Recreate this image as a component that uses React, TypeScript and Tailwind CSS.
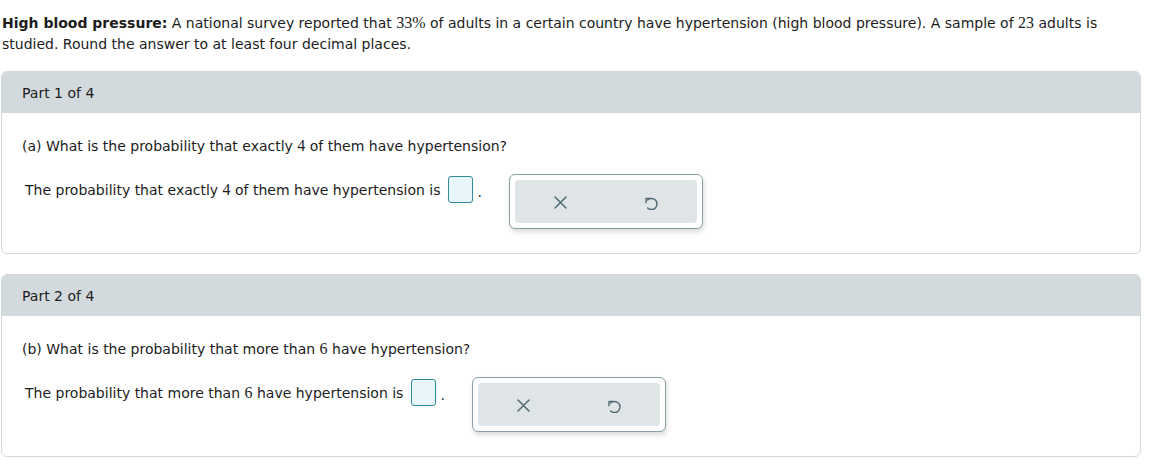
import { memo } from "react";

function Num({ children }: { children: React.ReactNode }) {
  return <span className="font-['Liberation_Serif'] text-[16px]">{children}</span>;
}

const XIcon = () => (
  <svg width="13" height="13" viewBox="0 0 13 13" fill="none">
    <path d="M1 1 L12 12 M12 1 L1 12" stroke="#4f6973" strokeWidth="1.5" strokeLinecap="round" />
  </svg>
);

// rotate-left: corner arrowhead top-left, arc clockwise round to the lower left
const UndoIcon = () => (
  <svg width="14" height="15" viewBox="0 0 14 15" fill="none">
    <path d="M3.6 5.1 A5.5 5.5 0 1 1 3.6 12.9" stroke="#4f6973" strokeWidth="1.4" strokeLinecap="round" />
    <path d="M6.4 3.4 L2 3.4 L2 7.8" stroke="#4f6973" strokeWidth="1.4" strokeLinecap="round" strokeLinejoin="round" />
  </svg>
);

const ToolPanel = memo(function ToolPanel() {
  return (
    <div className="ml-[27px] rounded-[6px] border border-[#8a9ea6] bg-white p-[5px] shadow-[1px_3px_5px_rgba(0,0,0,0.14)]">
      <div className="flex h-[43px] w-[182px] rounded-[4px] bg-[#dfe5e7]">
        <button className="flex flex-1 items-center justify-center pt-[1px]">
          <XIcon />
        </button>
        <button className="flex flex-1 items-center justify-center pt-[2px]">
          <UndoIcon />
        </button>
      </div>
    </div>
  );
});

const PartCard = memo(function PartCard({
  part,
  question,
  answer,
}: {
  part: number;
  question: React.ReactNode;
  answer: React.ReactNode;
}) {
  return (
    <div className="ml-[1px] w-[1140px] overflow-hidden rounded-[6px] border border-[#d3d9db] bg-white">
      <div className="flex h-[41px] items-center bg-[#d2dadd] pl-[20px] leading-[20px]">
        Part {part} of 4
      </div>
      <div className="pb-[24px] pl-[20px] pt-[23px]">
        <p className="leading-[20px]">{question}</p>
        <div className="mt-[18px] flex items-start">
          <div className="ml-[3px] mt-[2px] flex items-center">
            <span className="pt-[1px] leading-[20px]">{answer}</span>
            <span className="ml-[8px] inline-block h-[27px] w-[25px] rounded-[3px] border-[1.5px] border-[#2f8a99] bg-[#e8f5f9]" />
            <span className="ml-[4px] mt-[6px]">.</span>
          </div>
          <ToolPanel />
        </div>
      </div>
    </div>
  );
});

export default function App() {
  return (
    <div className="min-h-[464px] bg-white font-['DejaVu_Sans'] text-[14px] text-[#1c1c1c]">
      <p className="pl-[2px] pt-[12px] leading-[21px]">
        <b>High blood pressure:</b> A national survey reported that <Num>33%</Num> of adults in a
        certain country have hypertension (high blood pressure). A sample of <Num>23</Num> adults is
        <br />
        studied. Round the answer to at least four decimal places.
      </p>
      <div className="mt-[16px] flex flex-col gap-[20px]">
        <PartCard
          part={1}
          question={<>(a) What is the probability that exactly <Num>4</Num> of them have hypertension?</>}
          answer={<>The probability that exactly <Num>4</Num> of them have hypertension is</>}
        />
        <PartCard
          part={2}
          question={<>(b) What is the probability that more than <Num>6</Num> have hypertension?</>}
          answer={<>The probability that more than <Num>6</Num> have hypertension is</>}
        />
      </div>
    </div>
  );
}
